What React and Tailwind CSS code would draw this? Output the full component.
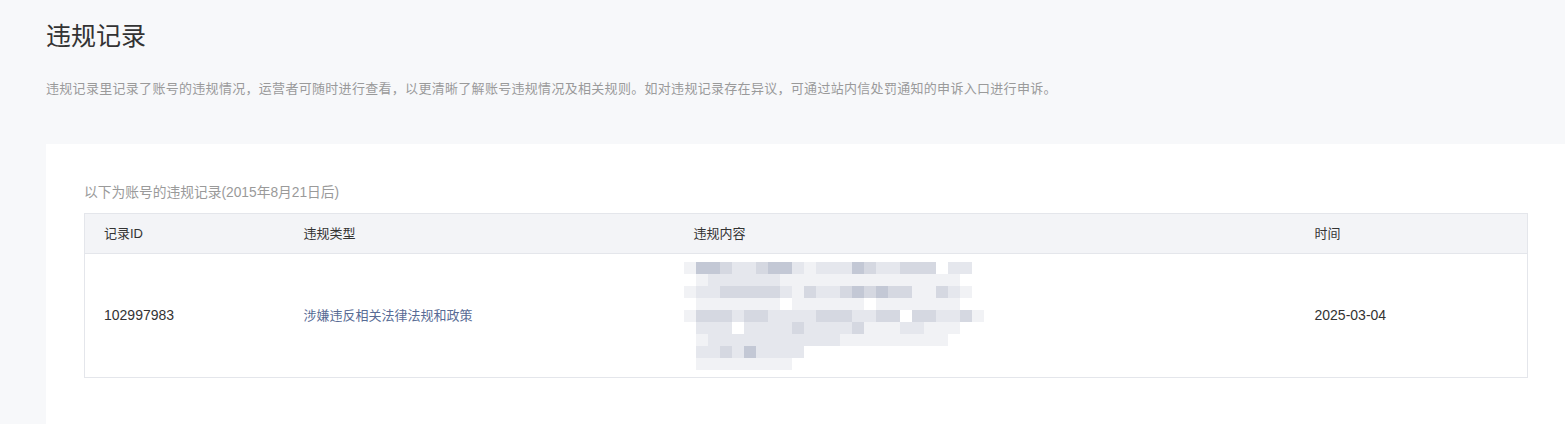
const FONT = 'font-["Liberation_Sans","Noto_Sans_CJK_SC",sans-serif]'

// blurred-out content, shade per 12px block (0 = white .. 4 = darkest)
const MOSAIC = [
  '144322344212224322333022',
  '012222221111111111111110',
  '1223333321322343433113210',
  '011111110111111011111110',
  '1333233222233322330332231',
  '022202222322223111221110',
  '012222222222211111111100',
  '0223242222',
  '0111111110',
]
const SHADES = ['#ffffff', '#f1f2f5', '#e5e7ed', '#d5d8e1', '#c3c8d5']

function Mosaic() {
  return (
    <svg width="302" height="108" viewBox="0 0 302 108" className="block">
      {MOSAIC.map((row, r) =>
        row.split('').map((c, i) => (
          <rect key={`${r}-${i}`} x={i * 12} y={r * 12} width="12" height="12" fill={SHADES[+c]} />
        ))
      )}
    </svg>
  )
}

export default function App() {
  return (
    <div className={`min-h-[424px] bg-[#f7f8fa] pl-[46px] ${FONT}`}>
      <h1 className="pt-[19px] text-[25px] leading-[34px] text-[#333]">违规记录</h1>
      <p className="mt-[27px] text-[13px] leading-[18px] tracking-[0.3px] text-[#9a9a9a]">
        违规记录里记录了账号的违规情况，运营者可随时进行查看，以更清晰了解账号违规情况及相关规则。如对违规记录存在异议，可通过站内信处罚通知的申诉入口进行申诉。
      </p>

      <div className="mt-[46px] bg-white pl-[38px] pr-[37px] pt-[39px] pb-[47px]">
        <p className="text-[13.75px] leading-[20px] text-[#9a9a9a]">以下为账号的违规记录(2015年8月21日后)</p>
        <table className="mt-[10px] w-full border-collapse border border-[#e4e6eb] text-[13px] text-[#333]">
          <colgroup>
            <col className="w-[200px]" />
            <col className="w-[390px]" />
            <col className="w-[621px]" />
            <col />
          </colgroup>
          <thead>
            <tr className="h-[40px] bg-[#f3f4f7] text-left">
              <th className="pl-[19px] font-normal">记录ID</th>
              <th className="pl-[19px] font-normal">违规类型</th>
              <th className="pl-[19px] font-normal">违规内容</th>
              <th className="pl-[19px] font-normal">时间</th>
            </tr>
          </thead>
          <tbody>
            <tr className="h-[124px] border-t border-[#e4e6eb]">
              <td className="pl-[19px] text-[14px]">102997983</td>
              <td className="pl-[19px] text-[#576b95]">涉嫌违反相关法律法规和政策</td>
              <td className="pl-[9px]"><Mosaic /></td>
              <td className="pl-[19px] text-[14px]">2025-03-04</td>
            </tr>
          </tbody>
        </table>
      </div>
    </div>
  )
}
